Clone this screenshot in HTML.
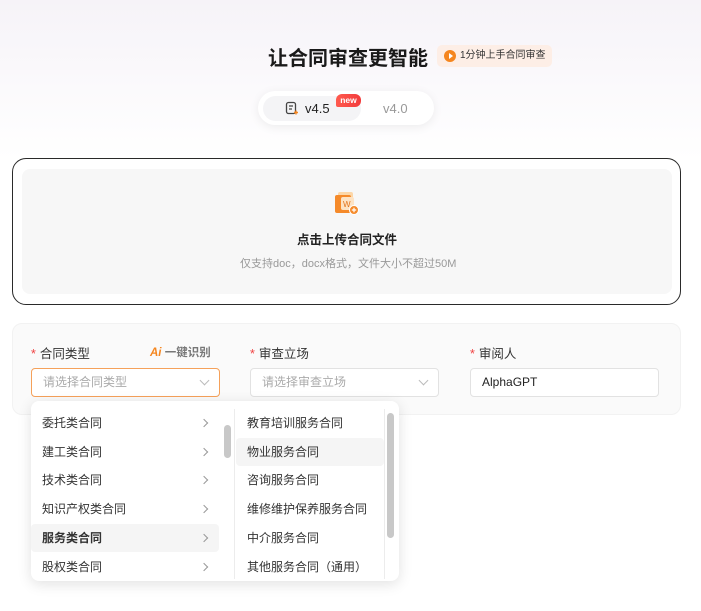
<!DOCTYPE html>
<html><head><meta charset="utf-8"><style>
*{margin:0;padding:0;box-sizing:border-box}
body{width:701px;height:611px;overflow:hidden;background:#fff;font-family:"Liberation Sans","Noto Sans CJK SC",sans-serif;position:relative;color:#222}
.bg{position:absolute;left:0;top:0;width:701px;height:160px;background:linear-gradient(180deg,#f6f3f8 0%,#fff 100%)}
.abs{position:absolute}
.title{left:268px;top:42px;font-size:20px;font-weight:bold;color:#1a1a1a}
.badge{left:437px;top:45px;width:115px;height:22px;background:#fdeee6;border-radius:5px;font-size:10px;color:#333;line-height:22px;padding-left:23px}
.badge i{position:absolute;left:7px;top:5px;width:12px;height:12px;border-radius:50%;background:#f5861f}
.badge i:after{content:"";position:absolute;left:4.5px;top:3px;border-left:4px solid #fff;border-top:3px solid transparent;border-bottom:3px solid transparent}
.tabs{left:258px;top:91px;width:176px;height:34px;background:#fff;border-radius:17px;box-shadow:0 2px 10px rgba(0,0,0,.07)}
.act{left:263px;top:96px;width:98px;height:25px;background:#f4f4f6;border-radius:13px}
.new{left:336px;top:94px;width:25px;height:13px;background:linear-gradient(90deg,#ff5a4e,#f23c3c);border-radius:6px 6px 6px 2px;color:#fff;font-size:8.5px;text-align:center;line-height:13px;font-weight:bold}
.up{left:12px;top:158px;width:669px;height:147px;border:1px solid #2a2a2a;border-radius:14px}
.inner{left:22px;top:169px;width:650px;height:125px;background:#f7f7f7;border-radius:8px}
.form{left:12px;top:323px;width:669px;height:92px;background:#fafafa;border-radius:10px;border:1px solid #f2f2f2}
.lbl{font-size:12.5px;color:#333;top:343px}
.lbl b{color:#f04040;font-weight:normal;margin-right:4px}
.inp{top:368px;height:29px;border:1px solid #e2e2e2;border-radius:4px;background:#fff;font-size:12px;color:#aaa;line-height:27px;padding-left:11px}
.chev{position:absolute;right:11px;top:8px;width:7px;height:7px;border-right:1px solid #bbb;border-bottom:1px solid #bbb;transform:rotate(45deg)}
.dd{left:31px;top:401px;width:368px;height:180px;background:#fff;border-radius:8px;box-shadow:0 3px 14px rgba(0,0,0,.12);overflow:hidden}
.it{position:absolute;height:28px;line-height:28px;font-size:12px;color:#333;padding-left:11px}
.c1{left:0;width:188px}
.c2{left:205px;width:148px}
.ar{position:absolute;right:12px;top:11px;width:6px;height:6px;border-right:1px solid #999;border-top:1px solid #999;transform:rotate(45deg)}
.sb{background:#c8c8c8;border-radius:4px;width:7px}
</style></head><body>
<div class="bg"></div>
<div class="abs title">让合同审查更智能</div>
<div class="abs badge"><i></i>1分钟上手合同审查</div>
<div class="abs tabs"></div>
<div class="abs act"></div>
<svg class="abs" style="left:285px;top:101px" width="14" height="15" viewBox="0 0 14 15"><rect x="1.5" y="1.5" width="9" height="11" rx="2" fill="none" stroke="#444" stroke-width="1.3"/><path d="M4 5h4M4 8h3" stroke="#444" stroke-width="1.2"/><path d="M11 9.5v4M9 11.5h4" stroke="#f5861f" stroke-width="1.4"/></svg>
<div class="abs" style="left:305px;top:101px;font-size:13px;color:#222">v4.5</div>
<div class="abs new">new</div>
<div class="abs" style="left:383px;top:101px;font-size:13px;color:#999">v4.0</div>
<div class="abs up"></div>
<div class="abs inner"></div>
<svg class="abs" style="left:334px;top:191px" width="26" height="26" viewBox="0 0 26 26"><rect x="4" y="1" width="15" height="18" rx="2" fill="#fcd7a8"/><rect x="1" y="4" width="16" height="18" rx="2" fill="#f58a2a"/><rect x="7" y="6" width="13" height="13" rx="2" fill="#fde3c4"/><text x="9" y="16" font-size="8" fill="#e2741c" font-family="Liberation Sans">W</text><circle cx="20" cy="19" r="4.5" fill="#f58a2a" stroke="#fff" stroke-width="1"/><path d="M20 16.8v4.4M17.8 19h4.4" stroke="#fff" stroke-width="1.2"/></svg>
<div class="abs" style="left:297px;top:229px;font-size:12.5px;font-weight:bold;color:#222">点击上传合同文件</div>
<div class="abs" style="left:240px;top:255px;font-size:11px;color:#999">仅支持doc，docx格式，文件大小不超过50M</div>
<div class="abs form"></div>
<div class="abs lbl" style="left:31px"><b>*</b>合同类型</div>
<div class="abs" style="left:150px;top:344px;font-size:11.5px;font-weight:bold;color:#777"><span style="color:#f5861f;font-style:italic">Ai</span> 一键识别</div>
<div class="abs lbl" style="left:250px"><b>*</b>审查立场</div>
<div class="abs lbl" style="left:470px"><b>*</b>审阅人</div>
<div class="abs inp" style="left:31px;width:189px;border-color:#f5a15a">请选择合同类型<span class="chev"></span></div>
<div class="abs inp" style="left:250px;width:189px">请选择审查立场<span class="chev"></span></div>
<div class="abs inp" style="left:470px;width:189px;color:#222">AlphaGPT</div>
<div class="abs dd">
<div class="it c1" style="top:8px">委托类合同<span class="ar"></span></div>
<div class="it c1" style="top:37px">建工类合同<span class="ar"></span></div>
<div class="it c1" style="top:65px">技术类合同<span class="ar"></span></div>
<div class="it c1" style="top:94px">知识产权类合同<span class="ar"></span></div>
<div class="it c1" style="top:123px;background:#f5f5f5;border-radius:4px;font-weight:bold">服务类合同<span class="ar"></span></div>
<div class="it c1" style="top:152px">股权类合同<span class="ar"></span></div>
<div class="abs sb" style="left:193px;top:24px;height:33px"></div>
<div class="abs" style="left:203px;top:8px;width:1px;height:170px;background:#ececec"></div>
<div class="it c2" style="top:8px">教育培训服务合同</div>
<div class="it c2" style="top:37px;background:#f5f5f5;border-radius:4px">物业服务合同</div>
<div class="it c2" style="top:65px">咨询服务合同</div>
<div class="it c2" style="top:94px">维修维护保养服务合同</div>
<div class="it c2" style="top:123px">中介服务合同</div>
<div class="it c2" style="top:152px">其他服务合同（通用）</div>
<div class="abs" style="left:353px;top:8px;width:1px;height:170px;background:#ececec"></div>
<div class="abs sb" style="left:356px;top:12px;height:125px"></div>
</div>
</body></html>
